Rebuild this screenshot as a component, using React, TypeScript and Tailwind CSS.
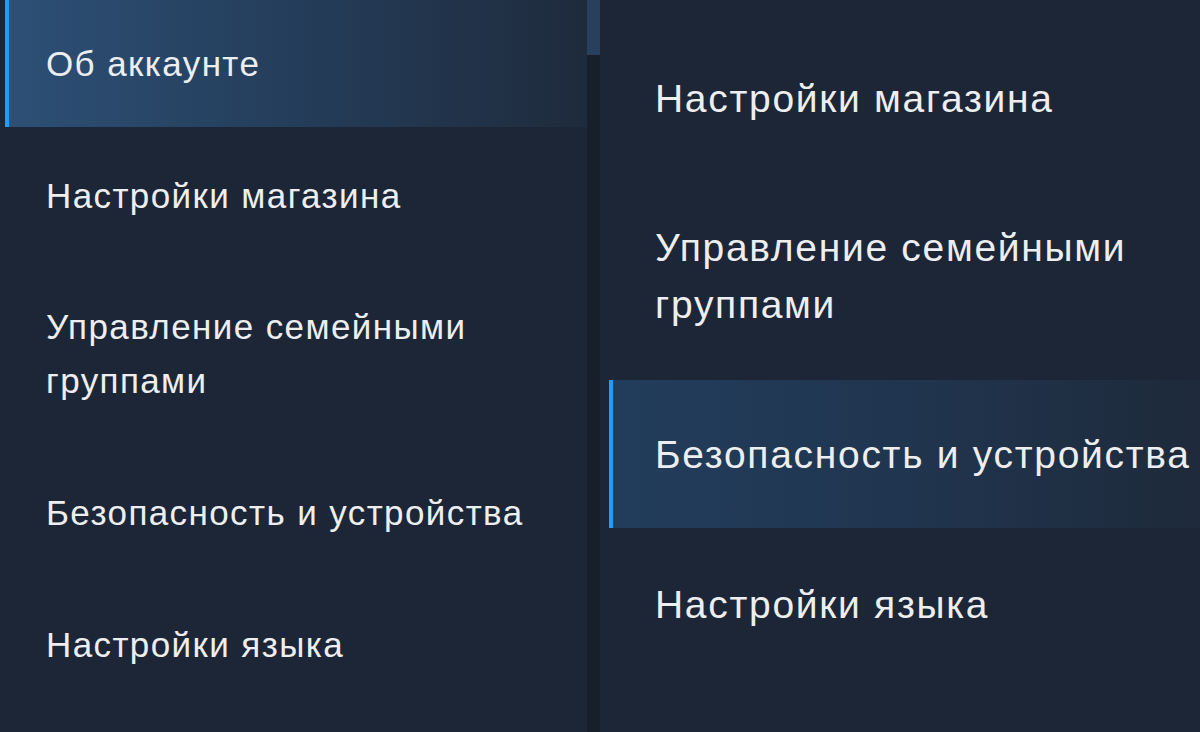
const leftItems = [
  { label: 'Об аккаунте', active: true },
  { label: 'Настройки магазина' },
  { label: 'Управление семейными группами' },
  { label: 'Безопасность и устройства' },
  { label: 'Настройки языка' },
];

const rightItems = [
  { label: 'Настройки магазина' },
  { label: 'Управление семейными группами' },
  { label: 'Безопасность и устройства', active: true },
  { label: 'Настройки языка' },
];

function MenuItem({
  label,
  active,
  size,
}: {
  label: string;
  active?: boolean;
  size: 'left' | 'right';
}) {
  const isLeft = size === 'left';
  return (
    <div
      className={`relative flex items-center ${
        isLeft
          ? 'min-h-[127px] pl-[41px] pr-[60px] py-[36px] text-[35px] leading-[54px] tracking-[1.4px]'
          : 'min-h-[148px] pl-[46px] pr-0 py-[45px] text-[39px] leading-[57px] tracking-[1.7px]'
      } ${
        active
          ? isLeft
            ? 'bg-gradient-to-r from-[#2d5076] via-[#243d5a] to-[#1f2b3d]'
            : 'bg-gradient-to-r from-[#223d5c] via-[#20354f] to-[#1e2a3b]'
          : ''
      }`}
    >
      {active && (
        <span className="absolute left-0 top-0 h-full w-[4px] bg-[#1a9fff]" />
      )}
      <span className="text-[#eceef0]">{label}</span>
    </div>
  );
}

export default function App() {
  return (
    <div className="flex h-[732px] w-[1200px] overflow-hidden bg-[#1c2637] font-['Liberation_Sans',Arial,sans-serif]">
      {/* left menu */}
      <div className="flex w-[587px] shrink-0 flex-col gap-[5px] pl-[5px]">
        {leftItems.map((item) => (
          <MenuItem key={item.label} label={item.label} active={item.active} size="left" />
        ))}
      </div>

      {/* scrollbar */}
      <div className="flex w-[13px] shrink-0 flex-col bg-[#171f2a]">
        <div className="h-[55px] w-full bg-[#283f5d]" />
      </div>

      {/* right menu */}
      <div className="flex flex-1 flex-col gap-[2px] pl-[9px] pt-[24px]">
        {rightItems.map((item) => (
          <MenuItem key={item.label} label={item.label} active={item.active} size="right" />
        ))}
      </div>
    </div>
  );
}
